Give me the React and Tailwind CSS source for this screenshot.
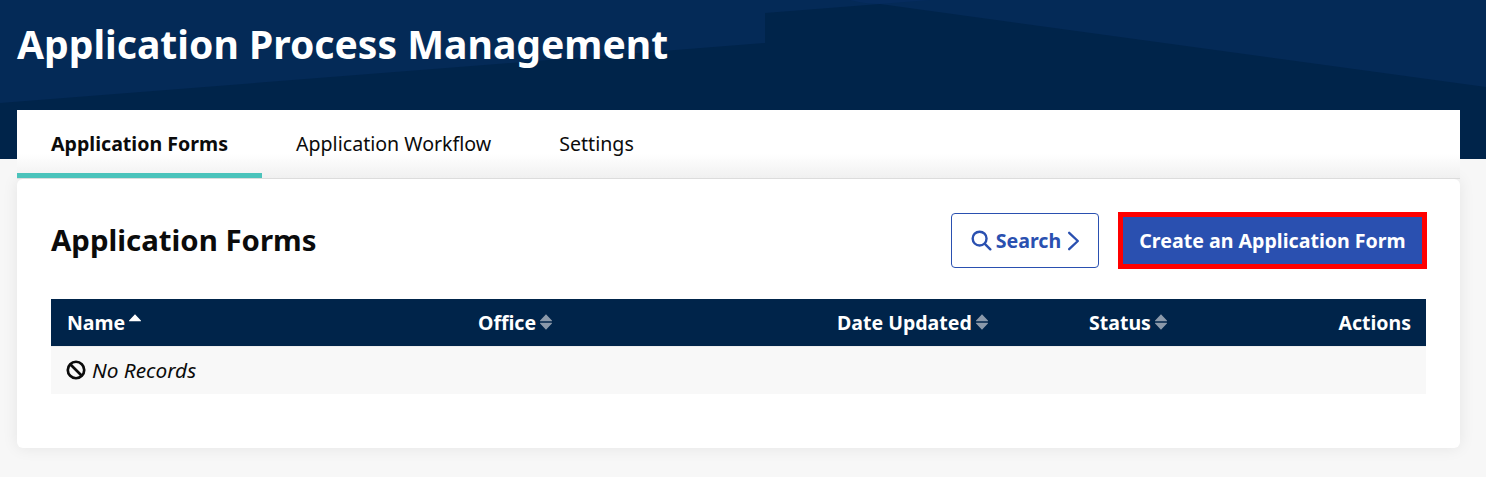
import React from "react";

const Sort = ({ active }) => (
  <svg width="14" height="18" viewBox="0 0 13 18" className="ml-[3px] shrink-0">
    <path d="M6.5 1.2 12.4 7.6a.4.4 0 0 1-.3.7H.9a.4.4 0 0 1-.3-.7Z" fill={active ? "#ffffff" : "#8b99aa"} />
    {!active && <path d="M6.5 16.8.6 10.4a.4.4 0 0 1 .3-.7h11.2a.4.4 0 0 1 .3.7Z" fill="#8b99aa" />}
  </svg>
);

const Th = ({ label, sort, active, className = "" }) => (
  <th className={`p-0 pl-[16px] font-bold text-left ${className}`}>
    <span className="flex items-center">
      {label}
      {sort && <Sort active={active} />}
    </span>
  </th>
);

export default function App() {
  return (
    <div className="min-h-[477px] bg-[#f7f7f7] font-['Noto_Sans',sans-serif] text-[#0b0b0b] overflow-hidden">
      <header className="relative h-[159px] bg-[#00244a] overflow-hidden">
        <svg className="absolute inset-0" width="1486" height="159" viewBox="0 0 1486 159">
          <path d="M0 0H1486V87L880 4 765 13V43L0 103Z" fill="#042a57" />
          <path d="M850 0H930L880 4Q865 4 850 0Z" fill="#062c5e" />
        </svg>
        <h1 className="relative m-0 pl-[17px] pt-[19px] text-[39.1px] leading-[50px] font-bold text-white">
          Application Process Management
        </h1>
      </header>

      <main className="relative mx-[17px] -mt-[49px] w-[1443px]">
        <nav className="relative z-10 flex h-[69px] bg-white border-b border-[#dcdcdc]">
          <div className="absolute inset-x-0 bottom-0 h-[24px] bg-gradient-to-b from-transparent to-[#f0f0f0]" />
          <div className="relative h-[68px] w-[245px] flex pl-[34px] pt-[20px] border-b-[5px] border-[#4bc3bb] text-[19.6px] leading-[28px] font-bold">
            Application Forms
          </div>
          <div className="relative ml-[34px] pt-[20px] text-[19.6px] leading-[28px]">Application Workflow</div>
          <div className="relative ml-[68px] pt-[20px] text-[19.6px] leading-[28px]">Settings</div>
        </nav>

        <section className="relative h-[269px] bg-white rounded-[6px] px-[34px] pt-[33px] shadow-[0_0_16px_rgba(0,0,0,0.08)]">
          <div className="flex items-center justify-between h-[56px]">
            <h2 className="m-0 text-[29.4px] leading-[38px] font-bold">Application Forms</h2>
            <div className="flex items-center gap-[19px] -mr-[1px]">
              <button className="flex items-center justify-center w-[148px] h-[55px] rounded-[4px] border border-[#2a50b0] bg-white text-[#2a50b0] text-[19.6px] font-bold pt-[1px] pl-[1px]">
                <svg width="21" height="21" viewBox="0 0 20 20" fill="none" stroke="#2a50b0" strokeWidth="2.3" className="mr-[4px]" strokeLinecap="round">
                  <circle cx="8.2" cy="8.2" r="6.6" />
                  <path d="M13.2 13.2 18.4 18.4" />
                </svg>
                Search
                <svg width="13" height="20" viewBox="0 0 12 18" fill="none" stroke="#2a50b0" strokeWidth="2.2" className="ml-[6px]" strokeLinecap="round" strokeLinejoin="round">
                  <path d="M2 1.5l8 7.5-8 7.5" />
                </svg>
              </button>
              <button className="w-[309px] h-[57px] border-[5px] border-[#ff0000] bg-[#2a50b0] text-white text-[19.6px] font-bold pt-[1px]">
                Create an Application Form
              </button>
            </div>
          </div>

          <table className="mt-[31px] w-[1375px] table-fixed border-collapse text-[19.52px]">
            <thead>
              <tr className="h-[47px] bg-[#00244a] text-white">
                <Th label="Name" sort active className="w-[411px]" />
                <Th label="Office" sort className="w-[359px]" />
                <Th label="Date Updated" sort className="w-[252px]" />
                <Th label="Status" sort className="w-[190px]" />
                <th className="p-0 pr-[15px] text-right font-bold">Actions</th>
              </tr>
            </thead>
            <tbody>
              <tr className="h-[48px] bg-[#f8f8f8] border-t border-[#eeeeee]">
                <td colSpan={5} className="p-0 pl-[15px]">
                  <span className="flex items-center italic text-[20.8px]">
                    <svg width="20" height="20" viewBox="0 0 18 18" fill="none" stroke="#0b0b0b" strokeWidth="2.4" className="mr-[6px]">
                      <circle cx="9" cy="9" r="7.4" />
                      <path d="M3.8 3.8l10.4 10.4" />
                    </svg>
                    No Records
                  </span>
                </td>
              </tr>
            </tbody>
          </table>
        </section>
      </main>
    </div>
  );
}
